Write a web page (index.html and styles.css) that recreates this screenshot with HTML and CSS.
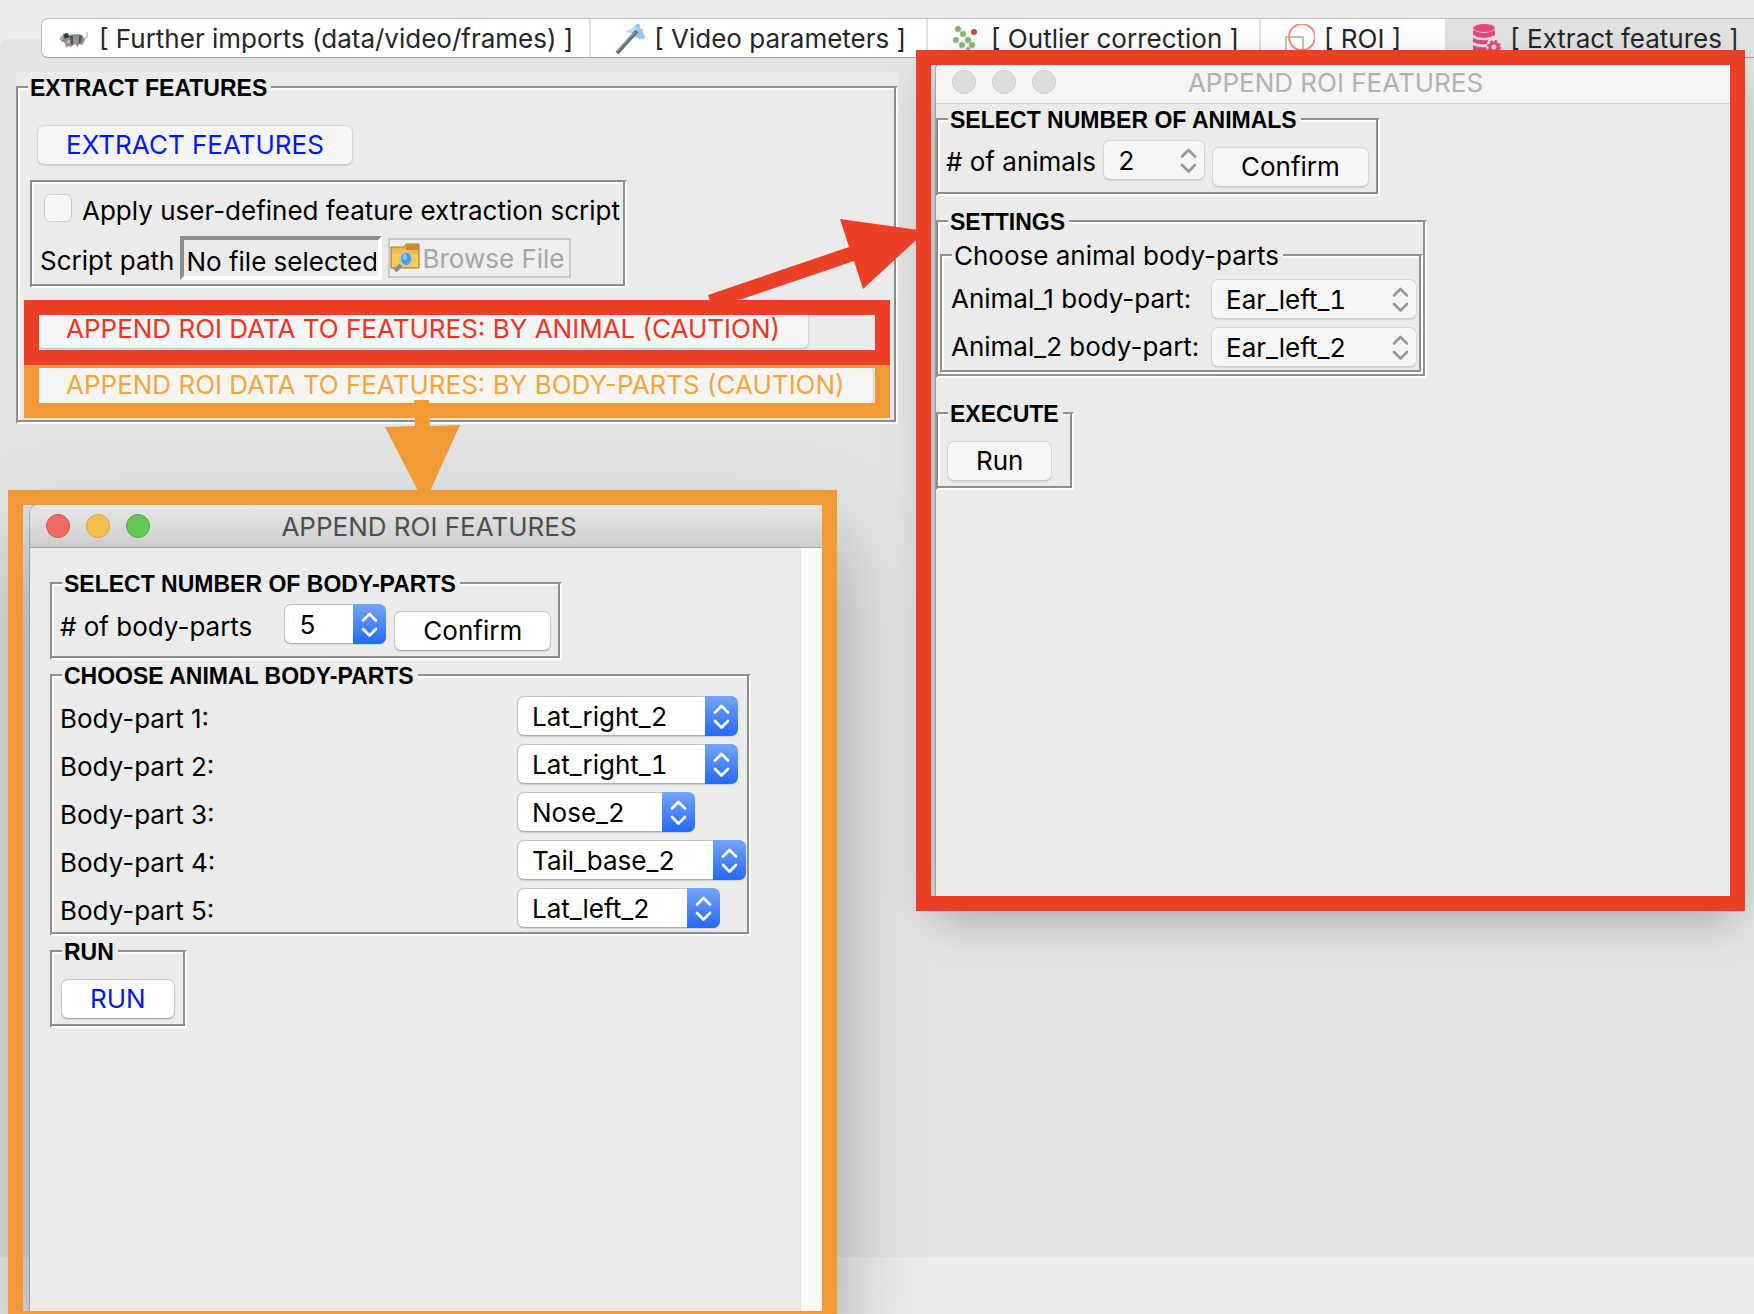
FILE: index.html
```html
<!DOCTYPE html>
<html lang="en">
<head>
<meta charset="utf-8">
<meta name="viewport" content="width=device-width, initial-scale=1">
<title>Extract features</title>
<link rel="stylesheet" href="styles.css">
</head>
<body>
<svg class="sprite" aria-hidden="true">
  <symbol id="updown" viewBox="0 0 33 40">
    <path d="M10 16.500l6.500-6.500 6.500 6.500M10 25l6.500 6.500 6.500-6.500" fill="none" stroke="currentColor" stroke-width="2.600" stroke-linecap="round" stroke-linejoin="round"/>
  </symbol>
</svg>
<div class="desktop">
  <div class="tabs" role="tablist">
    <button class="tab" role="tab" type="button">
      <svg class="tab-icon" viewBox="0 0 30 30" aria-hidden="true">
        <path d="M22 16q7-2 5-8" fill="none" stroke="#c4c4c4" stroke-width="1.500"/>
        <path d="M1 13l4-3 4 1 8-1 5 1 3 5-3 5-3-1-1 3-3-3-4 3-3-1-2 2-1-5-4-2z" fill="#8d8d8d"/>
        <path d="M3 10l5-1 1 4-4 2z" fill="#3d3d3d"/>
        <path d="M10 12l3-1v9l-2 1zM19 11l3 1-1 6-2 2z" fill="#565656"/>
        <path d="M0 13h3v3H0z" fill="#d9a066"/>
        <path d="M14 15h3v4h-3z" fill="#d58a6c"/>
        <path d="M7 16h3v3H7z" fill="#bdbdbd"/>
      </svg>
      <span>[ Further imports (data/video/frames) ]</span>
    </button>
    <button class="tab" role="tab" type="button">
      <svg class="tab-icon" viewBox="0 0 30 30" aria-hidden="true">
        <path d="M11 8l8-5 3-4 3 2v3l3 2v3l2 3-1 4-3-2-1 2-3-3-2 1-3-5z" fill="#8ecbf7"/>
        <path d="M13 7l8-5 1 3-6 4z" fill="#b5e0fb"/>
        <path d="M2 29L22 7" stroke="#65717e" stroke-width="4"/>
        <path d="M2 27L20 8" stroke="#a9b3bd" stroke-width="1"/>
      </svg>
      <span>[ Video parameters ]</span>
    </button>
    <button class="tab" role="tab" type="button">
      <svg class="tab-icon" viewBox="0 0 30 30" aria-hidden="true">
        <g fill="#8db56a" stroke="#b9c7b0" stroke-width="1">
          <circle cx="6" cy="5" r="3"/><circle cx="11" cy="10" r="3"/><circle cx="4" cy="16" r="3"/><circle cx="16" cy="16" r="3"/><circle cx="10" cy="21" r="3"/><circle cx="20" cy="21" r="3"/><circle cx="16" cy="25" r="2"/>
        </g>
        <circle cx="22" cy="8" r="3" fill="#e5402f"/>
      </svg>
      <span>[ Outlier correction ]</span>
    </button>
    <button class="tab tab-wide" role="tab" type="button">
      <svg class="tab-icon" viewBox="0 0 30 30" aria-hidden="true">
        <path d="M1 13h17v17H1z" fill="none" stroke="#b5cf9b" stroke-width="2"/>
        <circle cx="17" cy="13" r="13" fill="none" stroke="#ef8f84" stroke-width="2"/>
      </svg>
      <span>[ ROI ]</span>
    </button>
    <button class="tab tab-selected" role="tab" type="button" aria-selected="true">
      <svg class="tab-icon" viewBox="0 0 30 30" aria-hidden="true">
        <g fill="#e5487c">
          <ellipse cx="13" cy="4" rx="11" ry="4"/>
          <path d="M2 6q11 6 22 0v5q-11 6-22 0zM2 14q6 3 15 2l-1 4q-9 1-14-2zM2 21q6 3 13 2l2 5q-9 2-15-1z"/>
        </g>
        <circle cx="23" cy="23" r="4" fill="none" stroke="#e5487c" stroke-width="3"/>
        <circle cx="23" cy="23" r="6" fill="none" stroke="#e5487c" stroke-width="2" stroke-dasharray="2.700 2"/>
      </svg>
      <span>[ Extract features ]</span>
    </button>
  </div>

  <main class="pane">
    <div class="page">
      <fieldset class="frame">
        <legend class="caption">EXTRACT FEATURES</legend>
        <div class="page-body">
          <button class="btn btn-inactive blue" type="button">EXTRACT FEATURES</button>
          <div class="frame script">
            <label class="check"><input type="checkbox"> <span>Apply user-defined feature extraction script</span></label>
            <div class="path">
              <label for="script-path">Script path</label>
              <input id="script-path" class="entry" type="text" value="No file selected" readonly>
              <button class="browse" type="button" disabled>
                <svg class="browse-icon" viewBox="0 0 30 30" aria-hidden="true">
                  <path d="M1 4h13l2-3h13v24H1z" fill="#e9b83f" stroke="#9a7a35" stroke-width="1"/>
                  <path d="M16 2h12v5H16z" fill="#d9822b"/>
                  <path d="M2 7h26v4H2z" fill="#f6b765"/>
                  <path d="M2 11h26v13H2z" fill="#f7cf4c"/>
                  <path d="M11 22l-6 6" stroke="#8a8f98" stroke-width="4"/>
                  <ellipse cx="16" cy="16" rx="6" ry="7" fill="#4c9bd6" stroke="#b9cbb4" stroke-width="2"/>
                  <ellipse cx="15" cy="14" rx="2" ry="3" fill="#8cc8ee"/>
                </svg>
                <span>Browse File</span>
              </button>
            </div>
          </div>
          <button class="btn btn-inactive red" type="button">APPEND ROI DATA TO FEATURES: BY ANIMAL (CAUTION)</button>
          <button class="btn btn-inactive orange" type="button">APPEND ROI DATA TO FEATURES: BY BODY-PARTS (CAUTION)</button>
        </div>
      </fieldset>
    </div>
  </main>

  <div class="mark mark-orange mark-parts-button"></div>
  <div class="mark mark-red mark-animal-button"></div>

  <section class="window window-parts" aria-label="Append ROI features by body-parts">
    <header class="titlebar">
      <span class="light close"></span><span class="light minimise"></span><span class="light zoom"></span>
      <h2 class="title">APPEND ROI FEATURES</h2>
    </header>
    <div class="scroller">
      <div class="window-body">
        <fieldset class="frame">
          <legend class="caption">SELECT NUMBER OF BODY-PARTS</legend>
          <div class="count">
            <label class="count-label" for="parts-count">#&nbsp;of body-parts</label>
            <span class="drop"><select id="parts-count"><option>5</option></select><svg class="arrows" aria-hidden="true"><use href="#updown"/></svg></span>
            <button class="btn" type="button">Confirm</button>
          </div>
        </fieldset>
        <fieldset class="frame">
          <legend class="caption">CHOOSE ANIMAL BODY-PARTS</legend>
          <div class="choices">
            <label for="part-1">Body-part 1:</label>
            <span class="drop"><select id="part-1"><option>Lat_right_2</option></select><svg class="arrows" aria-hidden="true"><use href="#updown"/></svg></span>
            <label for="part-2">Body-part 2:</label>
            <span class="drop"><select id="part-2"><option>Lat_right_1</option></select><svg class="arrows" aria-hidden="true"><use href="#updown"/></svg></span>
            <label for="part-3">Body-part 3:</label>
            <span class="drop"><select id="part-3"><option>Nose_2</option></select><svg class="arrows" aria-hidden="true"><use href="#updown"/></svg></span>
            <label for="part-4">Body-part 4:</label>
            <span class="drop"><select id="part-4"><option>Tail_base_2</option></select><svg class="arrows" aria-hidden="true"><use href="#updown"/></svg></span>
            <label for="part-5">Body-part 5:</label>
            <span class="drop"><select id="part-5"><option>Lat_left_2</option></select><svg class="arrows" aria-hidden="true"><use href="#updown"/></svg></span>
          </div>
        </fieldset>
        <fieldset class="frame">
          <legend class="caption">RUN</legend>
          <div class="run"><button class="btn blue" type="button">RUN</button></div>
        </fieldset>
      </div>
    </div>
  </section>

  <section class="window window-animals inactive" aria-label="Append ROI features by animal">
    <header class="titlebar">
      <span class="light"></span><span class="light"></span><span class="light"></span>
      <h2 class="title">APPEND ROI FEATURES</h2>
    </header>
    <div class="window-body">
      <fieldset class="frame">
        <legend class="caption">SELECT NUMBER OF ANIMALS</legend>
        <div class="count">
          <label for="animal-count">#&nbsp;of animals</label>
          <span class="drop"><select id="animal-count"><option>2</option></select><svg class="arrows" aria-hidden="true"><use href="#updown"/></svg></span>
          <button class="btn btn-inactive" type="button">Confirm</button>
        </div>
      </fieldset>
      <fieldset class="frame settings">
        <legend class="caption">SETTINGS</legend>
        <fieldset class="frame">
          <legend class="caption caption-plain">Choose animal body-parts</legend>
          <div class="choices">
            <label for="animal-1">Animal_1 body-part:</label>
            <span class="drop"><select id="animal-1"><option>Ear_left_1</option></select><svg class="arrows" aria-hidden="true"><use href="#updown"/></svg></span>
            <label for="animal-2">Animal_2 body-part:</label>
            <span class="drop"><select id="animal-2"><option>Ear_left_2</option></select><svg class="arrows" aria-hidden="true"><use href="#updown"/></svg></span>
          </div>
        </fieldset>
      </fieldset>
      <fieldset class="frame">
        <legend class="caption">EXECUTE</legend>
        <div class="run"><button class="btn btn-inactive" type="button">Run</button></div>
      </fieldset>
    </div>
  </section>

  <div class="mark mark-orange mark-parts-window"></div>
  <div class="mark mark-red mark-animals-window"></div>
  <svg class="arrow arrow-orange" viewBox="0 0 76 92" aria-hidden="true">
    <path d="M29 0h15l1 26 30-1-30 66H33L0 27l30-1z" fill="#f19837"/>
  </svg>
  <svg class="arrow arrow-red" viewBox="0 0 218 84" aria-hidden="true">
    <path d="M0 76l141-48-9-28 86 12-63 58-9-28-112 38-31 5z" fill="#eb4025"/>
  </svg>
</div>
</body>
</html>
```
FILE: styles.css
```css
:root {
  --face: #ebebeb;
  --pane: #e3e3e3;
  --line: #8e8e8e;
  --red: #eb4025;
  --orange: #f19837;
}

* { box-sizing: border-box; }

body {
  margin: 0;
  background: var(--face);
  color: #000;
  font: 26px/30px Inter, "Liberation Sans", sans-serif;
}

button, input, select { font: inherit; color: inherit; }

label { white-space: nowrap; }

.sprite { position: absolute; width: 0; height: 0; }

.desktop {
  position: relative;
  display: flex;
  flex-direction: column;
  min-height: 100vh;
  padding: 18px 0 57px;
  overflow: hidden;
}

/* Notebook */
.tabs {
  position: relative;
  display: flex;
  height: 40px;
  margin: 0 -12px -19px 41px;
  background: #fff;
  border: 1px solid #bdbdbd;
  border-bottom-color: #a2a2a2;
  border-radius: 7px;
  overflow: hidden;
}

.tab {
  display: flex;
  align-items: center;
  gap: 9px;
  padding: 2px 20px 0 24px;
  border: 0;
  border-left: 2px solid #e2e2e2;
  background: none;
  color: #262626;
  white-space: nowrap;
}

.tab:first-child { padding: 2px 16px 0 18px; border-left: 0; }

.tab-wide { padding-right: 44px; }

.tab-selected { flex: 1; padding-left: 26px; border-left: 0; background: #e2e2e2; }

.tab-icon { flex: none; width: 30px; height: 30px; }

.pane {
  flex: 1;
  padding: 33px 16px 0;
  background: var(--pane);
  border-top-left-radius: 8px;
}

.page {
  width: fit-content;
  background: var(--face);
}

/* Grooved frames */
.frame {
  margin: 0;
  min-width: 0;
  padding: 0 2px 2px;
  border: 2px solid #fff;
  border-top-color: var(--line);
  border-left-color: var(--line);
  box-shadow: inset -2px -2px 0 var(--line), inset 2px 2px 0 #fff;
}

.caption {
  margin-left: 8px;
  padding: 2px 4px 0 2px;
  background: var(--face);
  font: bold 23px/28px "Liberation Sans", sans-serif;
}

.caption-plain { font: inherit; line-height: 28px; }

.page-body {
  display: flex;
  flex-direction: column;
  align-items: flex-start;
  padding: 23px 20px 15px 17px;
}

.page-body .orange { margin-top: 16px; }

.script {
  margin: 15px 0 21px -7px;
  padding: 12px 5px 6px 8px;
}

.check { display: flex; align-items: flex-start; gap: 10px; height: 32px; padding-left: 4px; }

.check span { line-height: 34px; }

.check input {
  appearance: none;
  width: 28px;
  height: 28px;
  margin: 0;
  border: 1px solid #cdcdcd;
  border-radius: 6px;
  background: #f5f5f5;
}

.path { display: flex; align-items: flex-start; gap: 6px; margin-top: 10px; }

.path label { padding-top: 10px; }

.entry {
  width: 202px;
  height: 44px;
  padding: 6px 2px 0;
  border: 4px solid #fff;
  border-top-color: var(--line);
  border-left-color: var(--line);
  background: var(--face);
}

.browse {
  display: flex;
  align-items: center;
  gap: 2px;
  height: 40px;
  margin-top: 2px;
  padding: 0 5px 0 0;
  border: 2px solid #cacaca;
  background: #efefef;
  color: #a5a5a5;
}

.browse span { padding-top: 2px; }

.browse-icon { width: 30px; height: 30px; }

/* Controls */
.btn {
  height: 40px;
  padding: 0 28px;
  border: 1px solid #c4c4c4;
  border-bottom-color: #adadad;
  border-radius: 7px;
  background: #fff;
  box-shadow: 0 1px 1px rgba(0, 0, 0, .1);
  white-space: nowrap;
}

.btn-inactive { background: #f5f5f5; border-color: #d6d6d6; border-bottom-color: #cacaca; }

.blue { color: #0018f9; }
.red { color: #ee3423; }
.orange { color: #f2a73b; }

.drop { position: relative; display: flex; height: 40px; justify-self: start; }

.drop select {
  appearance: none;
  width: 100%;
  height: 40px;
  padding: 2px 69px 0 14px;
  border: 1px solid #c4c4c4;
  border-bottom-color: #adadad;
  border-radius: 7px;
  background: #fff;
  box-shadow: 0 1px 1px rgba(0, 0, 0, .1);
  font-variant-numeric: tabular-nums;
}

.arrows {
  position: absolute;
  top: 0;
  right: 0;
  width: 33px;
  height: 40px;
  border-radius: 0 7px 7px 0;
  background: linear-gradient(#75a5f6, #2369f6);
  color: #fff;
  pointer-events: none;
}

.inactive .drop select { background: #f5f5f5; border-color: #d6d6d6; border-bottom-color: #cacaca; }
.inactive .arrows { background: none; color: #979797; }

/* Floating windows */
.window {
  position: absolute;
  display: flex;
  flex-direction: column;
  border-radius: 10px 10px 0 0;
  background: var(--face);
}

.window-parts {
  left: 30px;
  top: 504px;
  bottom: -16px;
  width: 798px;
  box-shadow: 0 0 0 1px rgba(0, 0, 0, .2), 0 36px 90px rgba(0, 0, 0, .38);
}

.window-animals {
  left: 936px;
  top: 60px;
  width: 799px;
  height: 840px;
  box-shadow: 0 0 0 1px rgba(0, 0, 0, .2), 0 16px 48px rgba(0, 0, 0, .3);
}

.titlebar {
  position: relative;
  display: flex;
  align-items: center;
  gap: 16px;
  height: 44px;
  padding: 0 16px;
  border-bottom: 1px solid #a5a5a5;
  border-radius: 10px 10px 0 0;
  background: linear-gradient(#e7e7e7, #cdcdcd);
  color: #4d4d4d;
}

.title {
  flex: 1;
  margin: 0 120px 0 0;
  padding-top: 2px;
  font: inherit;
  text-align: center;
}

.light { width: 24px; height: 24px; border: 1px solid #cdcdcd; border-radius: 50%; background: #dcdcdc; }
.close { background: #ed6b60; border-color: #d6534a; }
.minimise { background: #f6be4f; border-color: #dba13b; }
.zoom { background: #62c655; border-color: #4fa73f; }

.inactive .titlebar { background: #f5f5f5; border-color: #d0d0d0; color: #b1b1b1; }

.scroller {
  flex: 1;
  padding: 20px;
  margin-right: 27px;
  border-right: 1px solid #e2e2e2;
  box-shadow: 27px 0 0 #fafafa;
}

.window-body { display: flex; flex-direction: column; align-items: flex-start; }

.count {
  display: flex;
  align-items: flex-start;
  gap: 8px;
  padding: 6px 7px 5px 6px;
}

.inactive .count { gap: 7px; }

.count label { padding-top: 7px; }
.count .count-label { padding: 8px 24px 0 0; }
.count .btn { margin-top: 7px; }

.choices {
  display: grid;
  grid-template-columns: 449px auto;
  gap: 8px;
  padding: 6px 1px 4px 6px;
}

.choices label { padding-top: 8px; }

.run { padding: 13px 8px 5px 7px; }

.inactive .run { padding-right: 18px; }

.settings { margin: 10px 0 20px; padding: 4px 2px 2px; }

.settings .choices { grid-template-columns: 252px auto; padding: 9px 2px 3px 7px; }

.settings .choices label { padding-top: 5px; }

/* Call-outs */
.mark { position: absolute; border: 15px solid; }
.mark-red { border-color: var(--red); }
.mark-orange { border-color: var(--orange); }
.mark-parts-button { left: 24px; top: 353px; width: 866px; height: 65px; }
.mark-animal-button { left: 24px; top: 300px; width: 866px; height: 65px; }
.mark-parts-window { left: 8px; top: 490px; bottom: -12px; width: 829px; }
.mark-animals-window { left: 916px; top: 50px; width: 829px; height: 861px; }

.arrow { position: absolute; }
.arrow-orange { left: 385px; top: 400px; width: 76px; height: 92px; }
.arrow-red { left: 708px; top: 219px; width: 218px; height: 84px; }
```
